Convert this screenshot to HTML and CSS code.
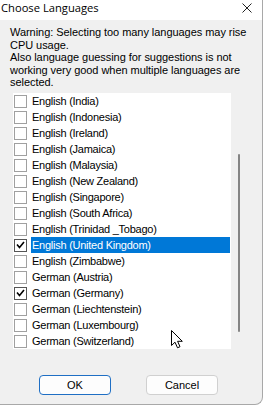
FILE: index.html
```html
<!DOCTYPE html>
<html>
<head>
    <title>Choose Languages</title>
    <link rel="stylesheet" href="styles.css">
</head>
<body>
    <div class="window">
        <div class="titlebar">
            <span class="title">Choose Languages</span>
            <svg class="close" width="10" height="10" viewBox="0 0 10 10">
                <path d="M0.5 0.5 L9.5 9.5 M9.5 0.5 L0.5 9.5" stroke="#222" stroke-width="1" fill="none"/>
            </svg>
        </div>
        <p class="warning">Warning: Selecting too many languages may rise CPU usage.<br>Also language guessing for suggestions is not working very good when multiple languages are selected.</p>
        <div class="list-wrap">
            <ul class="list">
                <li class="row"><span class="box"></span><span class="label">English (India)</span></li>
                <li class="row"><span class="box"></span><span class="label">English (Indonesia)</span></li>
                <li class="row"><span class="box"></span><span class="label">English (Ireland)</span></li>
                <li class="row"><span class="box"></span><span class="label">English (Jamaica)</span></li>
                <li class="row"><span class="box"></span><span class="label">English (Malaysia)</span></li>
                <li class="row"><span class="box"></span><span class="label">English (New Zealand)</span></li>
                <li class="row"><span class="box"></span><span class="label">English (Singapore)</span></li>
                <li class="row"><span class="box"></span><span class="label">English (South Africa)</span></li>
                <li class="row"><span class="box"></span><span class="label">English (Trinidad _Tobago)</span></li>
                <li class="row selected"><span class="box checked"><svg width="9" height="8" viewBox="0 0 9 8"><path d="M1 3.5 L3.5 6.5 L8 1" stroke="#000" stroke-width="1.6" fill="none"/></svg></span><span class="label">English (United Kingdom)</span></li>
                <li class="row"><span class="box"></span><span class="label">English (Zimbabwe)</span></li>
                <li class="row"><span class="box"></span><span class="label">German (Austria)</span></li>
                <li class="row"><span class="box checked"><svg width="9" height="8" viewBox="0 0 9 8"><path d="M1 3.5 L3.5 6.5 L8 1" stroke="#000" stroke-width="1.6" fill="none"/></svg></span><span class="label">German (Germany)</span></li>
                <li class="row"><span class="box"></span><span class="label">German (Liechtenstein)</span></li>
                <li class="row"><span class="box"></span><span class="label">German (Luxembourg)</span></li>
                <li class="row"><span class="box"></span><span class="label">German (Switzerland)</span></li>
            </ul>
            <div class="scrollbar">
                <div class="thumb"></div>
            </div>
        </div>
        <div class="buttons">
            <button class="btn default">OK</button>
            <button class="btn">Cancel</button>
        </div>
        <svg class="cursor" width="13" height="19" viewBox="0 0 13 19">
            <path d="M0.5 0.5 L0.5 15.5 L4 12.2 L6.5 17.8 L9 16.7 L6.6 11.3 L11.3 11.3 Z" fill="#fff" stroke="#000" stroke-width="1" stroke-linejoin="round"/>
        </svg>
    </div>
</body>
</html>
```

FILE: styles.css
```css
html, body {
    margin: 0;
    padding: 0;
}
body {
    font-family: 'Liberation Sans', Arial, sans-serif;
    font-size: 11px;
    color: #000;
    background: #fff;
}
.window {
    position: relative;
    width: 263px;
    height: 405px;
    box-sizing: border-box;
    background-color: #f0f0f0;
    border-right: 1px solid #a8a8a8;
    border-bottom: 1px solid #a8a8a8;
    border-bottom-right-radius: 8px;
    overflow: hidden;
}
.titlebar {
    height: 20px;
    background-color: #fff;
    display: flex;
    align-items: center;
    justify-content: space-between;
}
.title {
    font-family: 'Open Sans', 'Noto Sans', sans-serif;
    font-size: 11.2px;
    padding-left: 1px;
    margin-top: -5px;
}
.close {
    margin-right: 10px;
    margin-top: -4px;
}
.warning {
    margin: 0;
    padding: 6px 10px 0 10px;
    height: 67px;
    line-height: 12.5px;
    letter-spacing: -0.05px;
}
.list-wrap {
    display: flex;
    margin-left: 13px;
    height: 256px;
}
.list {
    list-style: none;
    margin: 0;
    padding: 0;
    width: 218px;
    background-color: #fff;
}
.row {
    height: 16px;
    display: flex;
    align-items: center;
}
.box {
    width: 13px;
    height: 13px;
    box-sizing: border-box;
    border: 1px solid #a0a0a0;
    background: #fff;
    margin-left: 1px;
    margin-right: 4px;
    display: flex;
    align-items: center;
    justify-content: center;
}
.box.checked {
    border-color: #555;
}
.label {
    flex: 1;
    height: 16px;
    line-height: 16px;
    padding-left: 1px;
    margin-right: 1px;
    letter-spacing: -0.25px;
}
.selected .label {
    background-color: #0078d7;
    color: #fff;
}
.scrollbar {
    width: 16px;
    display: flex;
    justify-content: center;
}
.thumb {
    width: 2px;
    height: 178px;
    margin-top: 61px;
    background-color: #858585;
    border-radius: 1px;
}
.buttons {
    display: flex;
    gap: 35px;
    margin: 26px 0 0 39px;
}
.btn {
    width: 72px;
    height: 20px;
    box-sizing: border-box;
    padding: 0;
    font-family: 'Liberation Sans', Arial, sans-serif;
    font-size: 11px;
    color: #000;
    background-color: #fdfdfd;
    border: 1px solid #d0d0d0;
    border-radius: 4px;
}
.btn.default {
    border: 1px solid #1f6fc4;
}
.cursor {
    position: absolute;
    left: 171px;
    top: 330px;
}
```
